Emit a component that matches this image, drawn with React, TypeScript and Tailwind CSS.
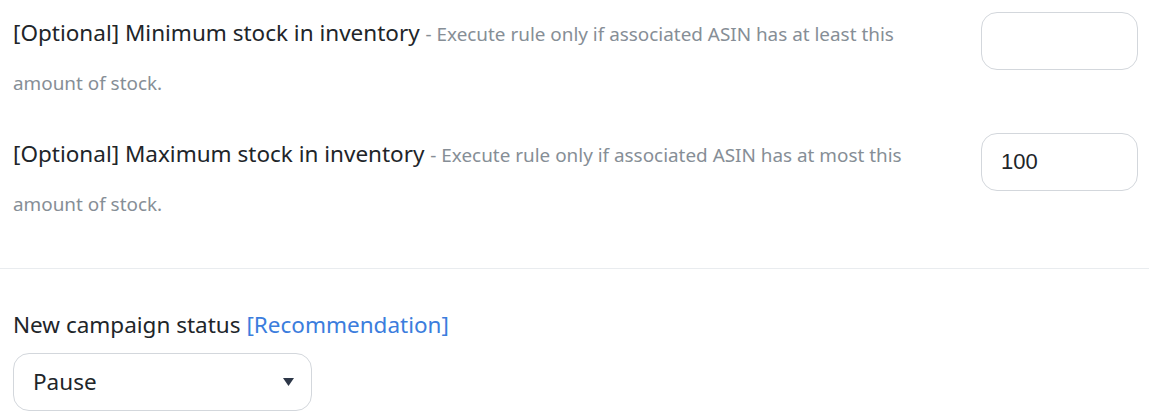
const font = "font-['Segoe_UI','Noto_Sans',sans-serif]";

function StockRow({
  label,
  desc,
  value,
}: {
  label: string;
  desc: string;
  value: string;
}) {
  return (
    <div className="flex items-start justify-between">
      <div className="w-[910px] text-[22.5px] leading-[48px] text-[#212529]">
        {label}{" "}
        <span className="text-[18.9px] leading-[48px] text-[#868e96]">{desc}</span>
      </div>
      <input
        readOnly
        value={value}
        className="mt-[3px] h-[58px] w-[157px] rounded-[16px] border border-[#d3d7dc] bg-white px-[19px] font-['Liberation_Sans',Arial,sans-serif] text-[22px] text-[#212529] outline-none"
      />
    </div>
  );
}

export default function App() {
  return (
    <div className={`${font} bg-white`}>
      <div className="flex flex-col gap-[23px] px-[13px] pt-[9px] pr-[11px]">
        <StockRow
          label="[Optional] Minimum stock in inventory"
          desc="- Execute rule only if associated ASIN has at least this amount of stock."
          value=""
        />
        <StockRow
          label="[Optional] Maximum stock in inventory"
          desc="- Execute rule only if associated ASIN has at most this amount of stock."
          value="100"
        />
      </div>

      <div className="mt-[40px] border-t border-[#e9ecef]" />

      <div className="px-[13px] pt-[40px]">
        <div className="text-[22.5px] leading-[32px] text-[#212529]">
          New campaign status{" "}
          <span className="text-[#3b7ddd]">[Recommendation]</span>
        </div>
        <div className="mt-[12px] flex h-[58px] w-[299px] items-center justify-between rounded-[16px] border border-[#d3d7dc] bg-white pl-[19px] pr-[17px]">
          <span className="text-[22.5px] text-[#212529]">Pause</span>
          <svg width="11" height="8" viewBox="0 0 11 8">
            <path d="M0 0h11L5.5 8z" fill="#2d3748" />
          </svg>
        </div>
      </div>
    </div>
  );
}
